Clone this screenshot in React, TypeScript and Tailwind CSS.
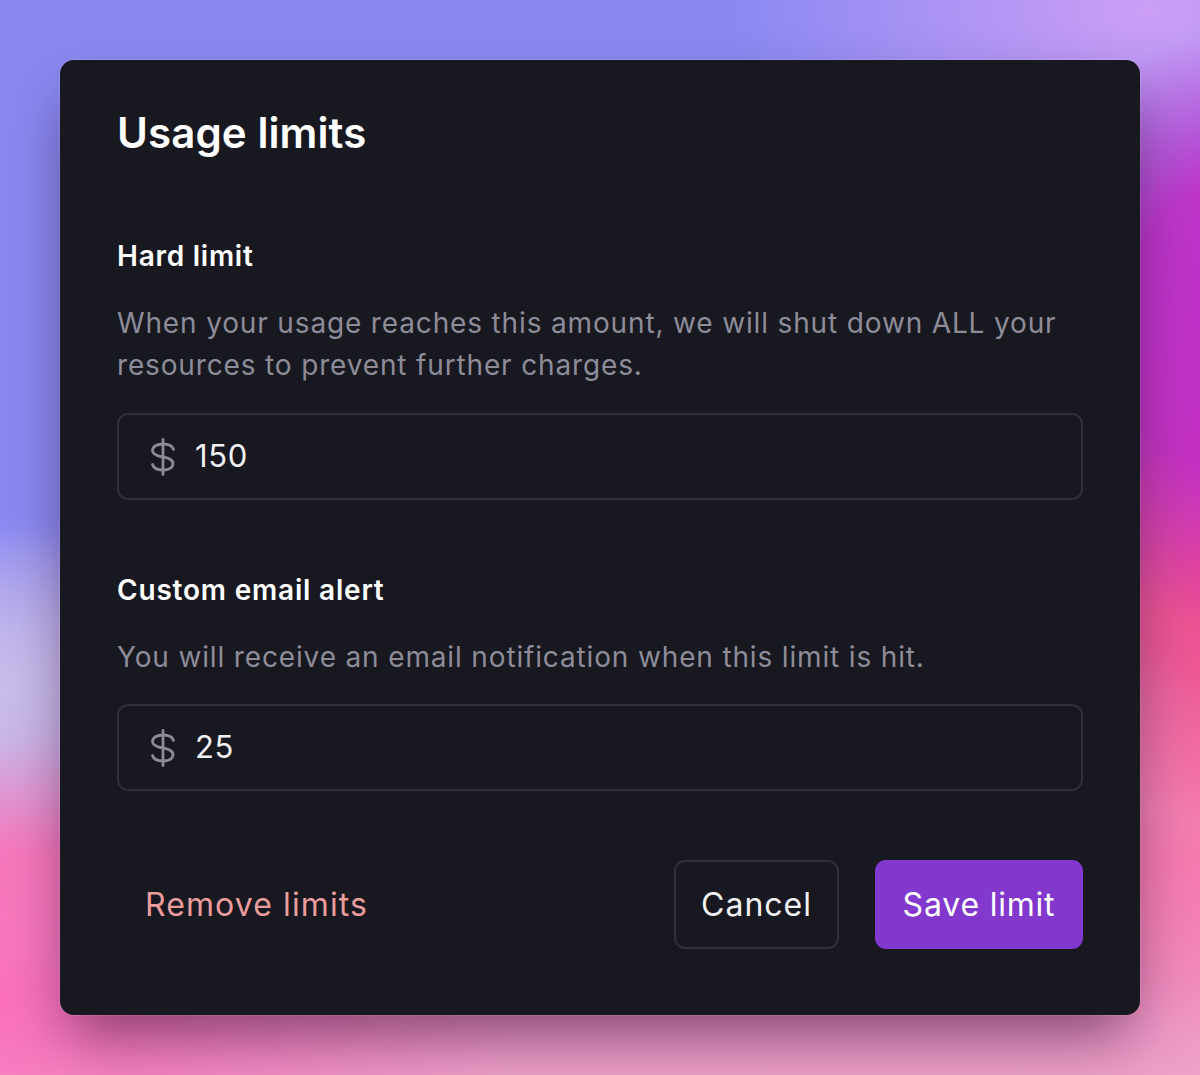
function DollarGlyph() {
  return (
    <svg
      viewBox="0 0 28 38"
      className="h-[38px] w-[28px] shrink-0 text-[#8b8a95]"
      fill="none"
      stroke="currentColor"
      strokeWidth={2.8}
      strokeLinecap="round"
    >
      <path d="M14 1.5v35" />
      <path d="M24.5 11.5C23.5 8 19.5 6 14 6 8 6 3.5 8.5 3.5 12.5S8 18 14 19s10 2.5 10 6.5S20 32 14 32C8.5 32 4.5 30 3.5 26.5" />
    </svg>
  );
}

function AmountField({ value }: { value: string }) {
  return (
    <div className="flex h-[87px] items-center gap-[18px] rounded-[11px] border-2 border-[#30303b] pl-[30px]">
      <DollarGlyph />
      <span className="text-[31px] tracking-[0.6px] text-[#f2f2f5]">{value}</span>
    </div>
  );
}

export default function App() {
  return (
    <div
      className="h-[1075px] w-[1200px] p-[60px] font-['Inter',sans-serif] bg-[radial-gradient(ellipse_240px_300px_at_1240px_330px,#c22ec6_0%,rgba(194,46,198,0.9)_50%,rgba(194,46,198,0)_100%),radial-gradient(ellipse_260px_260px_at_1230px_560px,#f24a8a_0%,rgba(242,74,138,0.8)_45%,rgba(242,74,138,0)_100%),radial-gradient(ellipse_300px_260px_at_1230px_780px,#f77aaa_0%,rgba(247,122,170,0)_100%),radial-gradient(ellipse_420px_240px_at_1150px_10px,#cc9ef6_0%,rgba(204,158,246,0)_100%),radial-gradient(ellipse_520px_260px_at_0px_1000px,#fb70bd_0%,rgba(251,112,189,0)_100%),radial-gradient(ellipse_260px_160px_at_0px_690px,#c8bdec_0%,rgba(200,189,236,0)_100%),linear-gradient(180deg,#8a89f2_0%,#8a89f2_48%,#c6b4ea_64%,#f47dbc_80%,#eea1ca_100%)]"
    >
      <div className="flex h-full w-full flex-col rounded-[14px] bg-[#181821] px-[57px] pb-[66px] pt-[47px] shadow-[0_30px_60px_-10px_rgba(40,10,40,0.55)] ring-1 ring-white/10">
        <h1 className="text-[42px] font-semibold leading-[52px] tracking-[0.1px] text-white">
          Usage limits
        </h1>

        <h2 className="mt-[79px] text-[28px] font-semibold leading-[36px] tracking-[0.75px] text-white">
          Hard limit
        </h2>
        <p className="mt-[28px] text-[28px] leading-[42px] tracking-[0.85px] text-[#8d8c98]">
          When your usage reaches this amount, we will shut down ALL your
          resources to prevent further charges.
        </p>
        <div className="mt-[27px]">
          <AmountField value="150" />
        </div>

        <h2 className="mt-[72px] text-[28px] font-semibold leading-[36px] tracking-[0.8px] text-white">
          Custom email alert
        </h2>
        <p className="mt-[28px] text-[28px] leading-[42px] tracking-[0.85px] text-[#8d8c98]">
          You will receive an email notification when this limit is hit.
        </p>
        <div className="mt-[26px]">
          <AmountField value="25" />
        </div>

        <div className="mt-auto flex items-center">
          <button className="ml-[28px] text-[32px] tracking-[1.1px] text-[#eb9c9c]">
            Remove limits
          </button>
          <div className="ml-auto flex gap-[36px]">
            <button className="h-[89px] w-[165px] rounded-[11px] border-2 border-[#30303b] text-[32px] tracking-[1px] text-[#f2f2f5]">
              Cancel
            </button>
            <button className="h-[89px] w-[208px] rounded-[11px] bg-[#8238cc] text-[32px] tracking-[0.8px] text-white">
              Save limit
            </button>
          </div>
        </div>
      </div>
    </div>
  );
}
